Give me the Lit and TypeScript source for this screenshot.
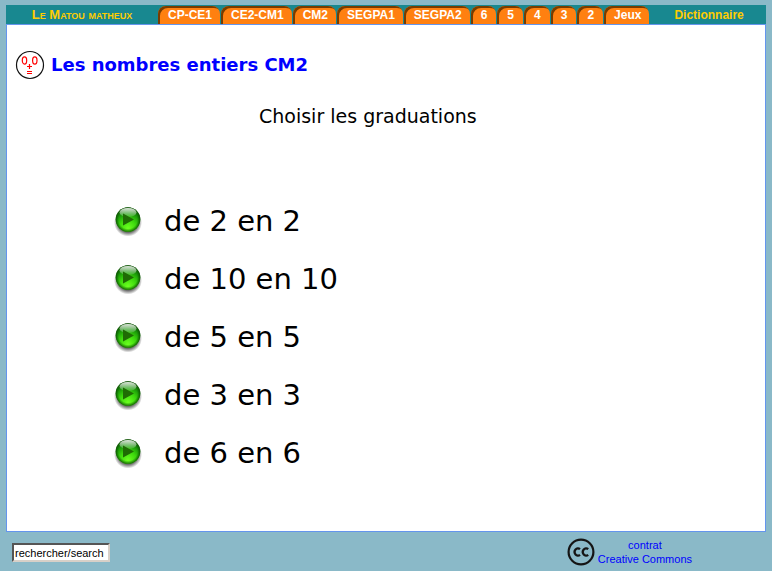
import { LitElement, html, css, svg } from "lit";
import { customElement, property } from "lit/decorators.js";

@customElement("play-icon")
class PlayIcon extends LitElement {
  static styles = css`
    :host { display: block; width: 28px; height: 32px; }
    svg { display: block; }
  `;
  render() {
    return html`<svg width="28" height="32" viewBox="0 0 28 32" aria-hidden="true">
      <defs>
        <radialGradient id="shade"><stop offset=".65" stop-color="#222" stop-opacity=".8"/><stop offset="1" stop-color="#222" stop-opacity="0"/></radialGradient>
        <radialGradient id="body" cx=".5" cy=".85" r=".85">
          <stop offset="0" stop-color="#6cff20"/><stop offset=".4" stop-color="#3cd80c"/><stop offset=".72" stop-color="#189408"/><stop offset="1" stop-color="#1c6412"/>
        </radialGradient>
        <radialGradient id="edge"><stop offset=".75" stop-color="#0a5200" stop-opacity="0"/><stop offset="1" stop-color="#0a4a00" stop-opacity=".8"/></radialGradient>
        <linearGradient id="shine" x1="0" y1="0" x2="0" y2="1"><stop offset="0" stop-color="#fff" stop-opacity=".85"/><stop offset="1" stop-color="#fff" stop-opacity=".1"/></linearGradient>
      </defs>
      <circle cx="14" cy="17.500" r="14" fill="url(#shade)"/>
      <circle cx="14" cy="14.5" r="12.3" fill="url(#body)"/>
      <circle cx="14" cy="14.5" r="12.3" fill="url(#edge)"/>
      <ellipse cx="14" cy="7.5" rx="8.5" ry="4.5" fill="url(#shine)"/>
      <path d="M9 8.5 20 14.5 9 20.5Z" fill="#1f6c04"/>
    </svg>`;
  }
}

@customElement("choice-list")
class ChoiceList extends LitElement {
  @property({ attribute: false }) choices: number[] = [];
  static styles = css`
    ul { list-style: none; margin: 0; padding: 0; }
    li { display: flex; align-items: center; gap: 22px; height: 58px; font-size: 29px; }
    button { border: 0; padding: 0; background: none; cursor: pointer; }
  `;
  render() {
    return html`<ul>${this.choices.map(n => html`<li>
      <button id="pas-${n}" aria-labelledby="texte-${n}"><play-icon></play-icon></button>
      <span id="texte-${n}">de ${n} en ${n}</span>
    </li>`)}</ul>`;
  }
}

const face = svg`
  <circle cx="15" cy="15" r="13.5" fill="#fff" stroke="#111" stroke-width="1.2"/>
  <g fill="none" stroke="#f00" stroke-width="1.2">
    <ellipse cx="9.5" cy="10.5" rx="2.2" ry="3.6"/>
    <ellipse cx="19.8" cy="10.5" rx="2.2" ry="3.6"/>
    <path d="M12 16.5h5M14.5 14v5"/>
    <path d="M12 21.5h5M12 23.5h5"/>
  </g>`;

@customElement("app-root")
class AppRoot extends LitElement {
  static styles = css`
    :host {
      display: flex; flex-direction: column; box-sizing: border-box;
      min-height: 100vh; padding: 5px 6px 0; background: #8ab9c8;
      font: 12px/14px "Liberation Sans", Arial, sans-serif;
    }
    a { text-decoration: none; }
    nav { display: flex; height: 19px; background: #188890; font-weight: bold; }
    .side { color: #fc0; padding-top: 3px; }
    .home { box-sizing: border-box; width: 152px; text-align: center; font-variant: small-caps; font-size: 13px; }
    .dico { padding-left: 25px; }
    .tabs { display: flex; gap: 1px; padding-top: 1px; }
    .tab {
      padding: 2px 8px 0 10px; color: #fff; background: #ff8010;
      border-radius: 8px 8px 0 0; box-shadow: inset 2px 2px 0 #783c00;
    }
    .level { padding-right: 9px; }
    main {
      flex: 1; box-sizing: border-box; background: #fff; border: 1px solid #6495ed; color: #000;
      font-family: "DejaVu Sans", Verdana, sans-serif; padding: 25px 8px 0;
    }
    h1 { display: flex; align-items: center; gap: 6px; margin: 0; color: #00f; font-size: 18px; line-height: 30px; }
    h2 { margin: 24px 0 0 244px; font-size: 19px; line-height: 24px; font-weight: normal; }
    choice-list { display: block; margin: 64px 0 0 99px; }
    footer { display: flex; justify-content: space-between; height: 39px; padding: 0 74px 0 6px; }
    input {
      box-sizing: border-box; width: 98px; height: 19px; margin-top: 11px; padding: 0 1px;
      border: 2px solid; border-color: #555 #d8d0c8 #d8d0c8 #555; background: #fff; color: #000;
      font: 11px "Liberation Sans", Arial, sans-serif;
    }
    .license { display: flex; align-items: flex-start; gap: 3px; color: #00f; text-align: center; font-size: 11px; padding-top: 6px; }
  `;
  render() {
    const tabs = ["CP-CE1", "CE2-CM1", "CM2", "SEGPA1", "SEGPA2", "6", "5", "4", "3", "2", "Jeux"];
    return html`
      <nav>
        <a class="side home" href="#">Le Matou matheux</a>
        <div class="tabs">${tabs.map(t => html`<a class=${t.length === 1 ? "tab level" : "tab"} href="#">${t}</a>`)}</div>
        <a class="side dico" href="#">Dictionnaire</a>
      </nav>
      <main>
        <h1><svg width="30" height="30" viewBox="0 0 30 30" aria-hidden="true">${face}</svg>Les nombres entiers CM2</h1>
        <h2>Choisir les graduations</h2>
        <choice-list .choices=${[2, 10, 5, 3, 6]}></choice-list>
      </main>
      <footer>
        <input type="text" aria-label="rechercher/search" value="rechercher/search">
        <a class="license" href="#">
          <svg width="28" height="28" viewBox="0 0 28 28" aria-hidden="true">
            <circle cx="14" cy="14" r="12.4" fill="none" stroke="#151515" stroke-width="2.2"/>
            <g fill="none" stroke="#151515" stroke-width="2.2">
              <path d="M13 11.2A3.3 3.6 0 1 0 13 16.8M21.2 11.2A3.3 3.6 0 1 0 21.2 16.8"/>
            </g>
          </svg>
          <span>contrat<br>Creative Commons</span>
        </a>
      </footer>`;
  }
}
